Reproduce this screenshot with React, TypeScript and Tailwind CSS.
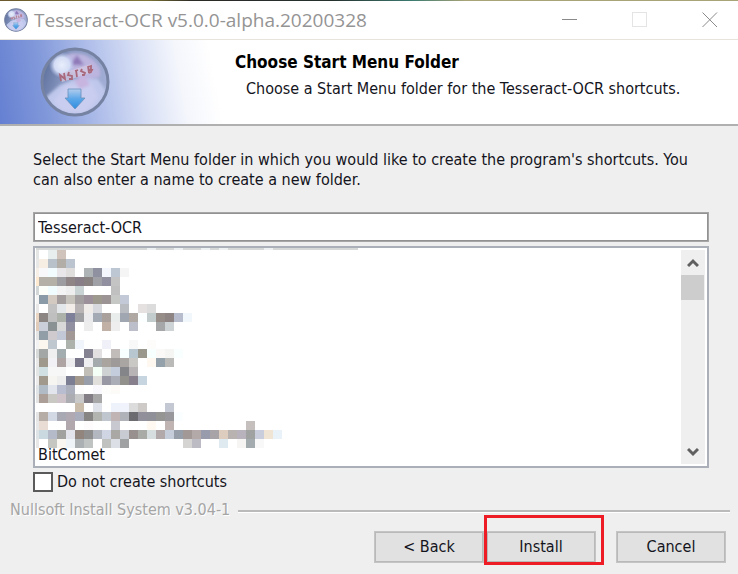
import { useState } from 'react'

const CELL = 9

// One string per row; '.' leaves the cell empty.
const mosaic = [
  '. e8edee cfc3bb',
  'f6eee3 b8c1c9 b3ada8 bcc5cf',
  'f8f8fa f2fcfe e8e6e8 e0dedd . aeb3b5 9091a0 f3f7fd bdc7d3 f5f5f5',
  'b4b0a8 b4b0a8 9d9ca0 8f8486 877e87 888382 a0a1a7 9090a0 c4c4c4',
  'fcfff9 f1fcff f4f4f4 eeeeee cad3d4 . . . c0c0c0',
  '8b9aa7 d3cbc2 a39e9d c5c3bc a39e9f 9c909a 9e998f 9c9494 c6c8c6 c3c9d7',
  '. c2c2c2 e3e7e9 f3ede9 b8b3b4 efebe8 d8d9de . . b9bdc2 . e5e1e0 dcdcdc',
  '8b8583 bfbfbf acb2aa 7e7f98 9fa0a4 ebebed a3aab4 aaa19d e9edeb a1a7b1 b0a8a3 fcffff c3cccc 978d88 8f8484 b8bdce f2f7fc',
  'cbcfda 8b9294 d8d8d8 9090a0 . ededed . c0b0a6 eeeeee . bcbfca . . a6a7a9 ced3d6',
  '919da7 cecacd c3c8d7 a29997',
  'fbf7ef bfc8ce . adb3ac eff5fb . . f0f1f8 . . f8f8f8 . fdfcfa',
  'a3a7a6 efefef a3adb0 . . 858291 e3e0e1 . c1bbb9 f7ffff b8c7cf 9a988c f7ffff faf9f7 f5f5f4 f9ffff',
  '9f988c f2f2f6 aea4a3 ededef 797789 efeff2 a5abac a9a49d 9f9a9a a9a5a3 c9c8c4 . fff8f0 94a0aa babbb8',
  'd0e0e3 f7f7f7 f7f7f7 . . c1beb8 f4fff5 cfd2d3 c3cddb 838589 b8b3b5',
  'a0998c f7f5f2 eeeeee 7c7e93 a3998c 999faa e0dfdb 9898a5 aaadb5 93918c 87808c c7d5e1',
  'b1bbc5 e2e5ec b8bdcf acb0bc fcfcfc . f9f8fc fdfdfb fdfbf8',
  'ac9f97 cac8c2 cdc3c9 acadb2 c9c9c9 837e86 a7a7a7',
  '. . . . c9bcab . dfe2e8 . edf2fb f0f3fb dcdcdc cdcac7 . . c4c8d3',
  'b5ada6 d3d8e5 a9a9b4 b0a9b1 a9acba 868583 b2b5af c0c6cd c0b5b4 b0b2b9 6c6c70 918f99 909099 959593 97979c fbfeff',
  'e8dcd4 . . b0a8ac . fdfbfb . . c7c8d0 . . . fff9f2 . c0b4b3 . . . . . . . . c5bfbd',
  'c9d9df b4bac8 a1a2a0 e3e4eb 91857e 8f8f8f b3b8c0 cfd5e2 a9a8a5 c9cbd3 97908f a9aba6 d6dedf b1a9aa c5ccda 959ea9 a29896 b3a9a9 989bac a8a3a7 dccdbf b8b3b1 b7b2bc a0a2a1 c9cddc f0e5d5 e9f2f8',
  '. c5c6c1 f9f6f2 eff4f8 abb1b2 bfc4c3 . c0c2c0 dce0e6 9fa1a2 . . . . . . d5d4d3 bcbbc4 . . dfe9f0 . f6f5f3 a4abaf f8f8f8',
].map((row) => row.split(' '))

const edge = [
  'e4e6e6', 'e8e8e8', 'f6efe8', 'ffe9d0', 'd3d6d6', 'f4f4f4', 'e8e8e8', 'ead6c3', 'e0cbb9', 'e4e4e4', 'f3f3f3',
  'd8dada', 'e8e8e8', 'e4e6e6', 'ececec', 'e0e4e6', 'e4e4e4', 'ffffff', 'e4e4e4', 'e8e8e8', 'dfe4e6', 'e8e8e8',
]

function Mosaic() {
  return (
    <svg aria-hidden width="322" height="200" shapeRendering="crispEdges" className="block">
      <path d="M0 1H322" stroke="#d6d8d8" strokeWidth="2" />
      <path d="M111 1H120M138 1H147M165 1H174M183 1H192M228 1H237" stroke="#eef1f2" strokeWidth="2" />
      {edge.map((fill, y) => (
        <rect key={y} x="0" y={2 + y * CELL} width="3" height={CELL} fill={`#${fill}`} />
      ))}
      {mosaic.map((row, y) =>
        row.map((fill, x) =>
          fill === '.' ? null : (
            <rect key={`${x}-${y}`} x={3 + x * CELL} y={2 + y * CELL} width={CELL} height={CELL} fill={`#${fill}`} />
          ),
        ),
      )}
    </svg>
  )
}

function InstallerLogo({ id, className }: { id: string; className: string }) {
  return (
    <svg aria-hidden viewBox="0 0 70 70" className={className}>
      <defs>
        <linearGradient id={`${id}-rim`} x1="0" y1="0.3" x2="1" y2="0.6">
          <stop offset="0" stopColor="#5d709c" />
          <stop offset="0.35" stopColor="#8797c0" />
          <stop offset="1" stopColor="#a3afd6" />
        </linearGradient>
        <radialGradient id={`${id}-ball`} cx="0.5" cy="0.5" r="0.5">
          <stop offset="0" stopColor="#e9eefb" />
          <stop offset="0.6" stopColor="#d3dcf5" />
          <stop offset="1" stopColor="#b4c0ea" stopOpacity="0" />
        </radialGradient>
        <linearGradient id={`${id}-arrow`} x1="0" y1="0" x2="0" y2="1">
          <stop offset="0" stopColor="#b3cdee" />
          <stop offset="0.5" stopColor="#5aa6e8" />
          <stop offset="1" stopColor="#2f8ee0" />
        </linearGradient>
        <clipPath id={`${id}-clip`}>
          <circle cx="35" cy="35" r="33" />
        </clipPath>
        <filter id={`${id}-soft`} x="-20%" y="-20%" width="140%" height="140%">
          <feGaussianBlur stdDeviation="1.8" />
        </filter>
        <filter id={`${id}-ink`}>
          <feGaussianBlur stdDeviation="0.5" />
        </filter>
      </defs>
      <circle cx="35" cy="35" r="33" fill={`url(#${id}-rim)`} />
      <g clipPath={`url(#${id}-clip)`}>
        <g filter={`url(#${id}-soft)`}>
          <path d="M26 8C38 3 54 9 60 22L60 30L42 34L30 24Z" fill="#bcb5e0" />
          <path d="M37 8L30 18L44 18Z" fill="#8f79b8" />
          <path d="M6 50L20 38L34 32L58 32L66 44L60 60L36 70L12 62Z" fill="#bfc8ec" />
          <path d="M14 54L26 38L52 36L58 50L46 66L22 64Z" fill="#c9cdef" />
          <path d="M34 34L44 28L50 38L40 42Z" fill="#c7b4df" />
        </g>
        <circle cx="22" cy="18" r="13" fill={`url(#${id}-ball)`} />
        <path d="M19 27L51 17L53 25L22 35Z" fill="#d6c9e0" opacity="0.7" />
        <path
          d="M21 34L20 28L25 32L24 26M29 25L28 28L32 29L32 32L29 32M36 23L37 30M35 24L38 23M42 22L41 24L45 26L44 28L42 28M48 19L49 26M48 20L51 19L51 22L49 23L52 23L51 25L49 26"
          fill="none"
          stroke="#a9697d"
          strokeWidth="1.8"
          filter={`url(#${id}-ink)`}
        />
      </g>
      <circle cx="35" cy="35" r="33" fill="none" stroke="#7682a2" strokeWidth="3" />
      <path d="M28 42H41V51H45L35 62L25 51H28Z" fill={`url(#${id}-arrow)`} stroke="#6b8fbd" strokeWidth="0.8" />
    </svg>
  )
}

function TitleBar() {
  return (
    <div className="flex h-[39px] items-center border-b border-[#e6e4dc] bg-white pr-5 pl-1">
      <InstallerLogo id="small" className="size-6" />
      <h1 className="ml-1.5 flex-1 font-['Open_Sans','Noto_Sans',sans-serif] text-[19px] leading-6 whitespace-nowrap text-[#949494]">
        Tesseract-OCR v5.0.0-alpha.20200328
      </h1>
      <div className="flex items-center gap-[54px] text-[#8a8a8a]">
        <button type="button" aria-label="Minimize">
          <svg width="16" height="16" className="block">
            <path d="M0 7.5H15" stroke="currentColor" />
          </svg>
        </button>
        <button type="button" aria-label="Maximize" disabled>
          <svg width="16" height="16" className="block">
            <rect x="0.5" y="0.5" width="14" height="14" fill="none" stroke="#e4e4e4" />
          </svg>
        </button>
        <button type="button" aria-label="Close">
          <svg width="16" height="16" className="block">
            <path d="M0.5 0.5L15 15M15 0.5L0.5 15" stroke="currentColor" />
          </svg>
        </button>
      </div>
    </div>
  )
}

function Header() {
  return (
    <header className="flex h-[86px] border-b-2 border-[#b0b0b0] bg-white bg-[linear-gradient(80deg,#6580d2_0px,#8299da_50px,#b3c1eb_105px,#dbe2f6_150px,#f4f6fc_185px,#ffffff_220px)]">
      <InstallerLogo id="large" className="mt-[7px] ml-10 size-[70px]" />
      <div className="ml-[125px] pt-[11px]">
        <h2 className="text-[17px] leading-[22px] font-bold whitespace-nowrap text-black">Choose Start Menu Folder</h2>
        <p className="mt-1 ml-[11px] text-[16px] leading-6 whitespace-nowrap">
          Choose a Start Menu folder for the Tesseract-OCR shortcuts.
        </p>
      </div>
    </header>
  )
}

function ScrollBar() {
  return (
    <div className="mt-0.5 mr-0.5 mb-0.5 flex w-6 flex-col items-center bg-[#efefef]">
      <button type="button" aria-label="Scroll up" className="flex h-[25px] w-full items-center justify-center">
        <svg width="12" height="10">
          <path d="M1 8L6 3L11 8" fill="none" stroke="#606060" strokeWidth="3" />
        </svg>
      </button>
      <div className="mr-px h-[25px] w-[23px] bg-[#cdcdcd]" />
      <button type="button" aria-label="Scroll down" className="mt-auto flex h-[25px] w-full items-center justify-center">
        <svg width="12" height="10">
          <path d="M1 2L6 7L11 2" fill="none" stroke="#606060" strokeWidth="3" />
        </svg>
      </button>
    </div>
  )
}

const buttonClass =
  'h-8 w-[110px] border border-[#c4c4c4] bg-[#e1e1e1] text-[16px] leading-5 shadow-[inset_0_0_0_1px_#b9b9b9]'

export default function App() {
  const [folder, setFolder] = useState('Tesseract-OCR')
  const [skip, setSkip] = useState(false)

  return (
    <main className="min-h-screen bg-[#efefef] font-['DejaVu_Sans_Condensed','Noto_Sans',sans-serif] text-[16px] text-[#14141c]">
      <div className="h-px bg-[linear-gradient(90deg,#6b5a2c,#7d7434_20%,#2c2a26_26%,#24302e_45%,#3d7c70_56%,#a8a378_63%)]" />
      <TitleBar />
      <Header />

      <section className="px-[29px] pt-6 pl-[33px]">
        <label htmlFor="folder" className="block leading-5">
          Select the Start Menu folder in which you would like to create the program's shortcuts. You can also enter a
          name to create a new folder.
        </label>
        <input
          id="folder"
          value={folder}
          onChange={(e) => setFolder(e.target.value)}
          className="mt-[22px] block h-[30px] w-full border border-[#a6a6a6] bg-white px-1 leading-5 shadow-[inset_0_0_0_1px_#929292] outline-none"
        />
        <div className="mt-1 flex border-2 border-[#abafb7] bg-white">
          <ul className="flex-1 pl-px">
            <li>
              <Mosaic />
            </li>
            <li className="pb-1 pl-0.5 leading-[14px]">BitComet</li>
          </ul>
          <ScrollBar />
        </div>
        <label className="mt-1 flex items-center gap-1 leading-5">
          <input
            type="checkbox"
            checked={skip}
            onChange={(e) => setSkip(e.target.checked)}
            className="size-5 appearance-none border-2 border-[#5a5a5a] bg-white checked:bg-[#4a4a4a]"
          />
          Do not create shortcuts
        </label>
      </section>

      <div className="mt-2 flex items-center gap-2 pr-2 pl-[10px] leading-5">
        <span className="whitespace-nowrap text-[#a5a5a5] [text-shadow:1px_1px_0_#fff]">Nullsoft Install System v3.04-1</span>
        <div className="mt-0.5 h-[3px] flex-1 border-t-2 border-b border-t-[#bababa] border-b-white" />
      </div>

      <div className="mt-[11px] flex justify-end pr-3">
        <button type="button" className={buttonClass}>
          &lt; Back
        </button>
        <div className="relative mr-5 ml-0.5">
          <button type="button" className={buttonClass}>
            Install
          </button>
          <div className="pointer-events-none absolute -top-4 -right-2 -bottom-0.5 -left-0.5 border-3 border-[#ee1c25]" />
        </div>
        <button type="button" className={buttonClass}>
          Cancel
        </button>
      </div>
    </main>
  )
}
